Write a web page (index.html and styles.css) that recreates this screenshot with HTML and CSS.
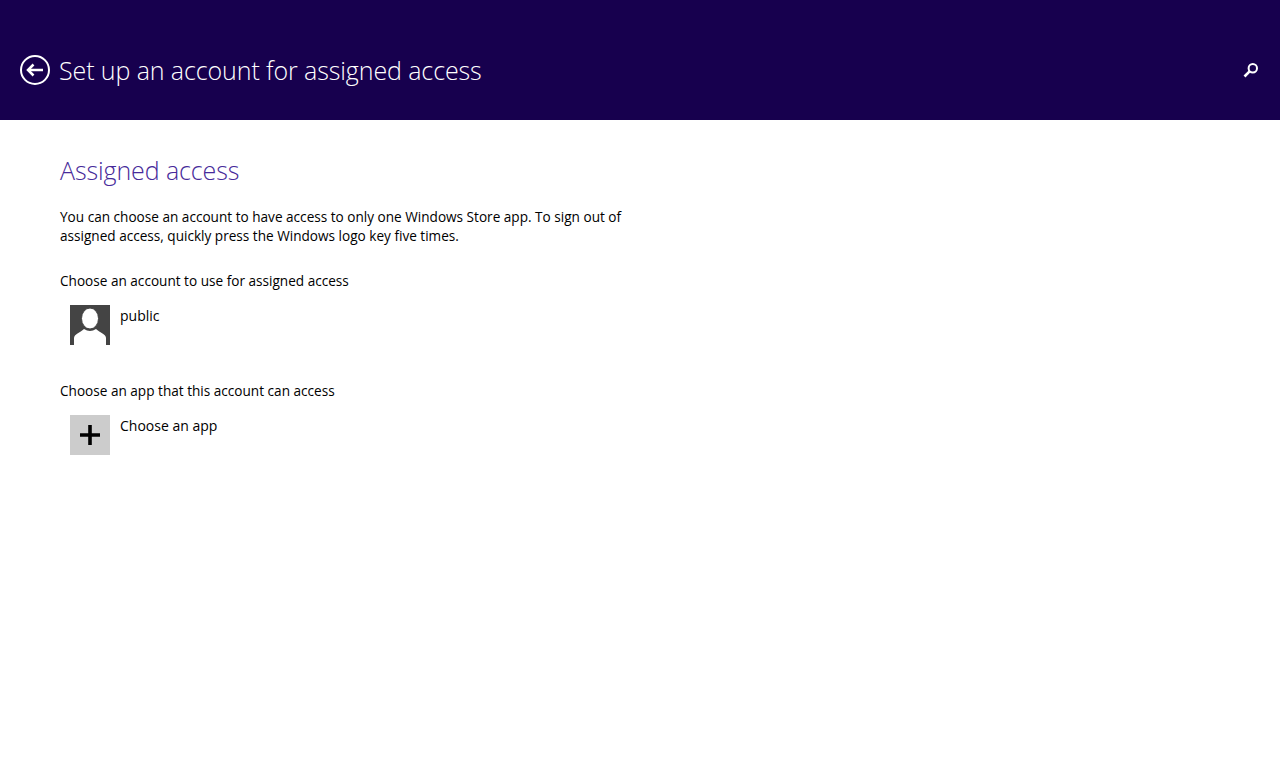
FILE: index.html
```html
<!DOCTYPE html>
<html lang="en">
<head>
<meta charset="UTF-8" />
<title>Set up an account for assigned access</title>
<link rel="stylesheet" href="styles.css">
</head>
<body>

<header class="top-bar">
    <button class="back-btn" type="button" aria-label="Back">
        <svg width="32" height="32" viewBox="0 0 32 32">
            <circle cx="16" cy="16" r="14" fill="none" stroke="#fff" stroke-width="2"/>
            <path d="M9 16H24" fill="none" stroke="#fff" stroke-width="2.5"/>
            <path d="M14.5 10.5L9 16L14.5 21.5" fill="none" stroke="#fff" stroke-width="2.5"/>
        </svg>
    </button>
    <h1 class="page-title">Set up an account for assigned access</h1>
    <svg class="search-icon" width="16" height="16" viewBox="0 0 16 16">
        <circle cx="9.8" cy="6.2" r="4.2" fill="none" stroke="#fff" stroke-width="2"/>
        <path d="M6.8 9.2L1.5 14.5" fill="none" stroke="#fff" stroke-width="2.6"/>
    </svg>
</header>

<main class="content">
    <h2 class="section-title">Assigned access</h2>
    <p class="intro">You can choose an account to have access to only one Windows Store app. To sign out of assigned access, quickly press the Windows logo key five times.</p>

    <div class="field-label">Choose an account to use for assigned access</div>
    <div class="tile-row">
        <div class="tile tile-user">
            <svg width="40" height="40" viewBox="0 0 40 40">
                <path d="M4 40V33C4 29 10 28 14 24Q20 28 26 24C30 28 36 29 36 33V40Z" fill="#fff"/>
                <ellipse cx="20" cy="13.5" rx="8.5" ry="10.5" fill="#fff" stroke="#444" stroke-width="1"/>
            </svg>
        </div>
        <div class="tile-name">public</div>
    </div>

    <div class="field-label">Choose an app that this account can access</div>
    <div class="tile-row">
        <div class="tile tile-add">
            <svg width="20" height="20" viewBox="0 0 20 20">
                <path d="M10 0V20M0 10H20" fill="none" stroke="#000" stroke-width="3.6"/>
            </svg>
        </div>
        <div class="tile-name">Choose an app</div>
    </div>
</main>

</body>
</html>
```

FILE: styles.css
```css
body {
    margin: 0;
    padding: 0;
    font-family: "Open Sans", "Noto Sans", sans-serif;
    background-color: #ffffff;
    color: #000000;
}

.top-bar {
    height: 120px;
    background-color: #17004e;
    display: flex;
    align-items: center;
    padding: 20px 20px 0 19px;
    box-sizing: border-box;
    color: #ffffff;
}

.back-btn {
    width: 32px;
    height: 32px;
    padding: 0;
    border: none;
    background: none;
    margin-right: 8px;
}

.page-title {
    margin: 0;
    font-size: 25px;
    letter-spacing: -0.1px;
    font-weight: 300;
    flex: 1;
}

.search-icon {
    margin-right: 1px;
    margin-bottom: 1px;
}

.content {
    padding: 31px 60px 0 60px;
}

.section-title {
    margin: 0 0 18px 0;
    font-size: 25px;
    letter-spacing: -0.1px;
    line-height: 38px;
    font-weight: 300;
    color: #472a9a;
}

.intro {
    margin: 0 0 26px 0;
    width: 580px;
    font-size: 13.6px;
    line-height: 19px;
}

.field-label {
    font-size: 13.6px;
    line-height: 19px;
    margin-bottom: 15px;
}

.tile-row {
    display: flex;
    align-items: flex-start;
    padding-left: 10px;
    margin-bottom: 36px;
}

.tile {
    width: 40px;
    height: 40px;
    flex: none;
    display: flex;
    align-items: center;
    justify-content: center;
    margin-right: 10px;
}

.tile-user {
    background-color: #444444;
}

.tile-add {
    background-color: #cccccc;
}

.tile-name {
    font-size: 14px;
    line-height: 19px;
    margin-top: 1px;
}
```
